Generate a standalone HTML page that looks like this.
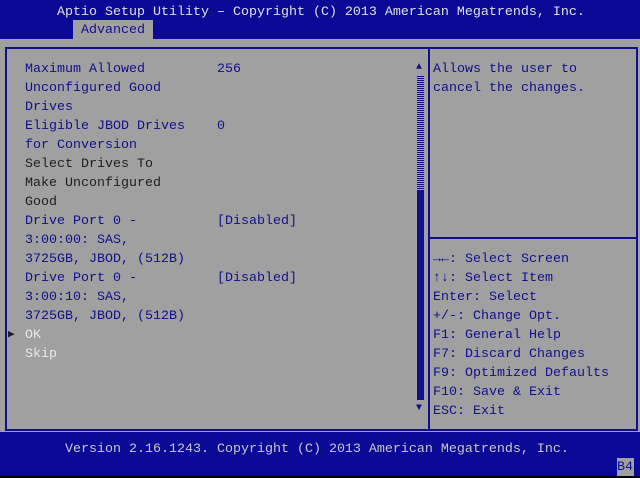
<!DOCTYPE html>
<html><head><style>
body{margin:0;width:640px;height:478px;background:#a0a0a0;position:relative;overflow:hidden;font-family:"Liberation Mono",monospace;font-size:13.33px;}
.t{position:absolute;white-space:pre;line-height:19px;}
.b{color:#10108c}.w{color:#e8e8e8}.k{color:#202020}
</style></head><body>
<div style="position:absolute;left:0;top:0;width:640px;height:39px;background:#0a0a96"></div>
<div class="t" style="left:57px;top:3px;color:#e0e0e0">Aptio Setup Utility – Copyright (C) 2013 American Megatrends, Inc.</div>
<div style="position:absolute;left:73px;top:20px;width:80px;height:19px;background:#a0a0a0"></div>
<div class="t b" style="left:81px;top:21px">Advanced</div>
<div style="position:absolute;left:5px;top:47px;width:629px;height:380px;border:2px solid #10108c"></div>
<div style="position:absolute;left:428px;top:47px;width:2px;height:382px;background:#10108c"></div>
<div style="position:absolute;left:430px;top:237px;width:206px;height:2px;background:#10108c"></div>
<div style="position:absolute;left:416px;top:62px;color:#10108c;font-size:10px">▲</div>
<div style="position:absolute;left:417px;top:75px;width:7px;height:116px;background:repeating-linear-gradient(0deg,#10108c 0 1px,#a0a0a0 1px 2px)"></div>
<div style="position:absolute;left:417px;top:191px;width:7px;height:209px;background:#10108c"></div>
<div style="position:absolute;left:416px;top:403px;color:#10108c;font-size:10px">▼</div>
<div class="t b" style="left:25px;top:60px">Maximum Allowed         256
Unconfigured Good
Drives
Eligible JBOD Drives    0
for Conversion</div>
<div class="t k" style="left:25px;top:155px">Select Drives To
Make Unconfigured
Good</div>
<div class="t b" style="left:25px;top:212px">Drive Port 0 -          [Disabled]
3:00:00: SAS,
3725GB, JBOD, (512B)
Drive Port 0 -          [Disabled]
3:00:10: SAS,
3725GB, JBOD, (512B)</div>
<div class="t k" style="left:8px;top:326px;font-size:11px">▶</div>
<div class="t w" style="left:25px;top:326px">OK
Skip</div>
<div class="t b" style="left:433px;top:60px">Allows the user to
cancel the changes.</div>
<div class="t b" style="left:433px;top:250px">→←: Select Screen
↑↓: Select Item
Enter: Select
+/-: Change Opt.
F1: General Help
F7: Discard Changes
F9: Optimized Defaults
F10: Save &amp; Exit
ESC: Exit</div>
<div style="position:absolute;left:0;top:432px;width:640px;height:44px;background:#0a0a96"></div>
<div class="t" style="left:65px;top:440px;color:#c8c8c8">Version 2.16.1243. Copyright (C) 2013 American Megatrends, Inc.</div>
<div style="position:absolute;left:617px;top:458px;width:17px;height:18px;background:#a0a0a0"></div>
<div class="t b" style="left:617px;top:458px">B4</div>
<div style="position:absolute;left:0;top:476px;width:640px;height:2px;background:#000"></div>
</body></html>
